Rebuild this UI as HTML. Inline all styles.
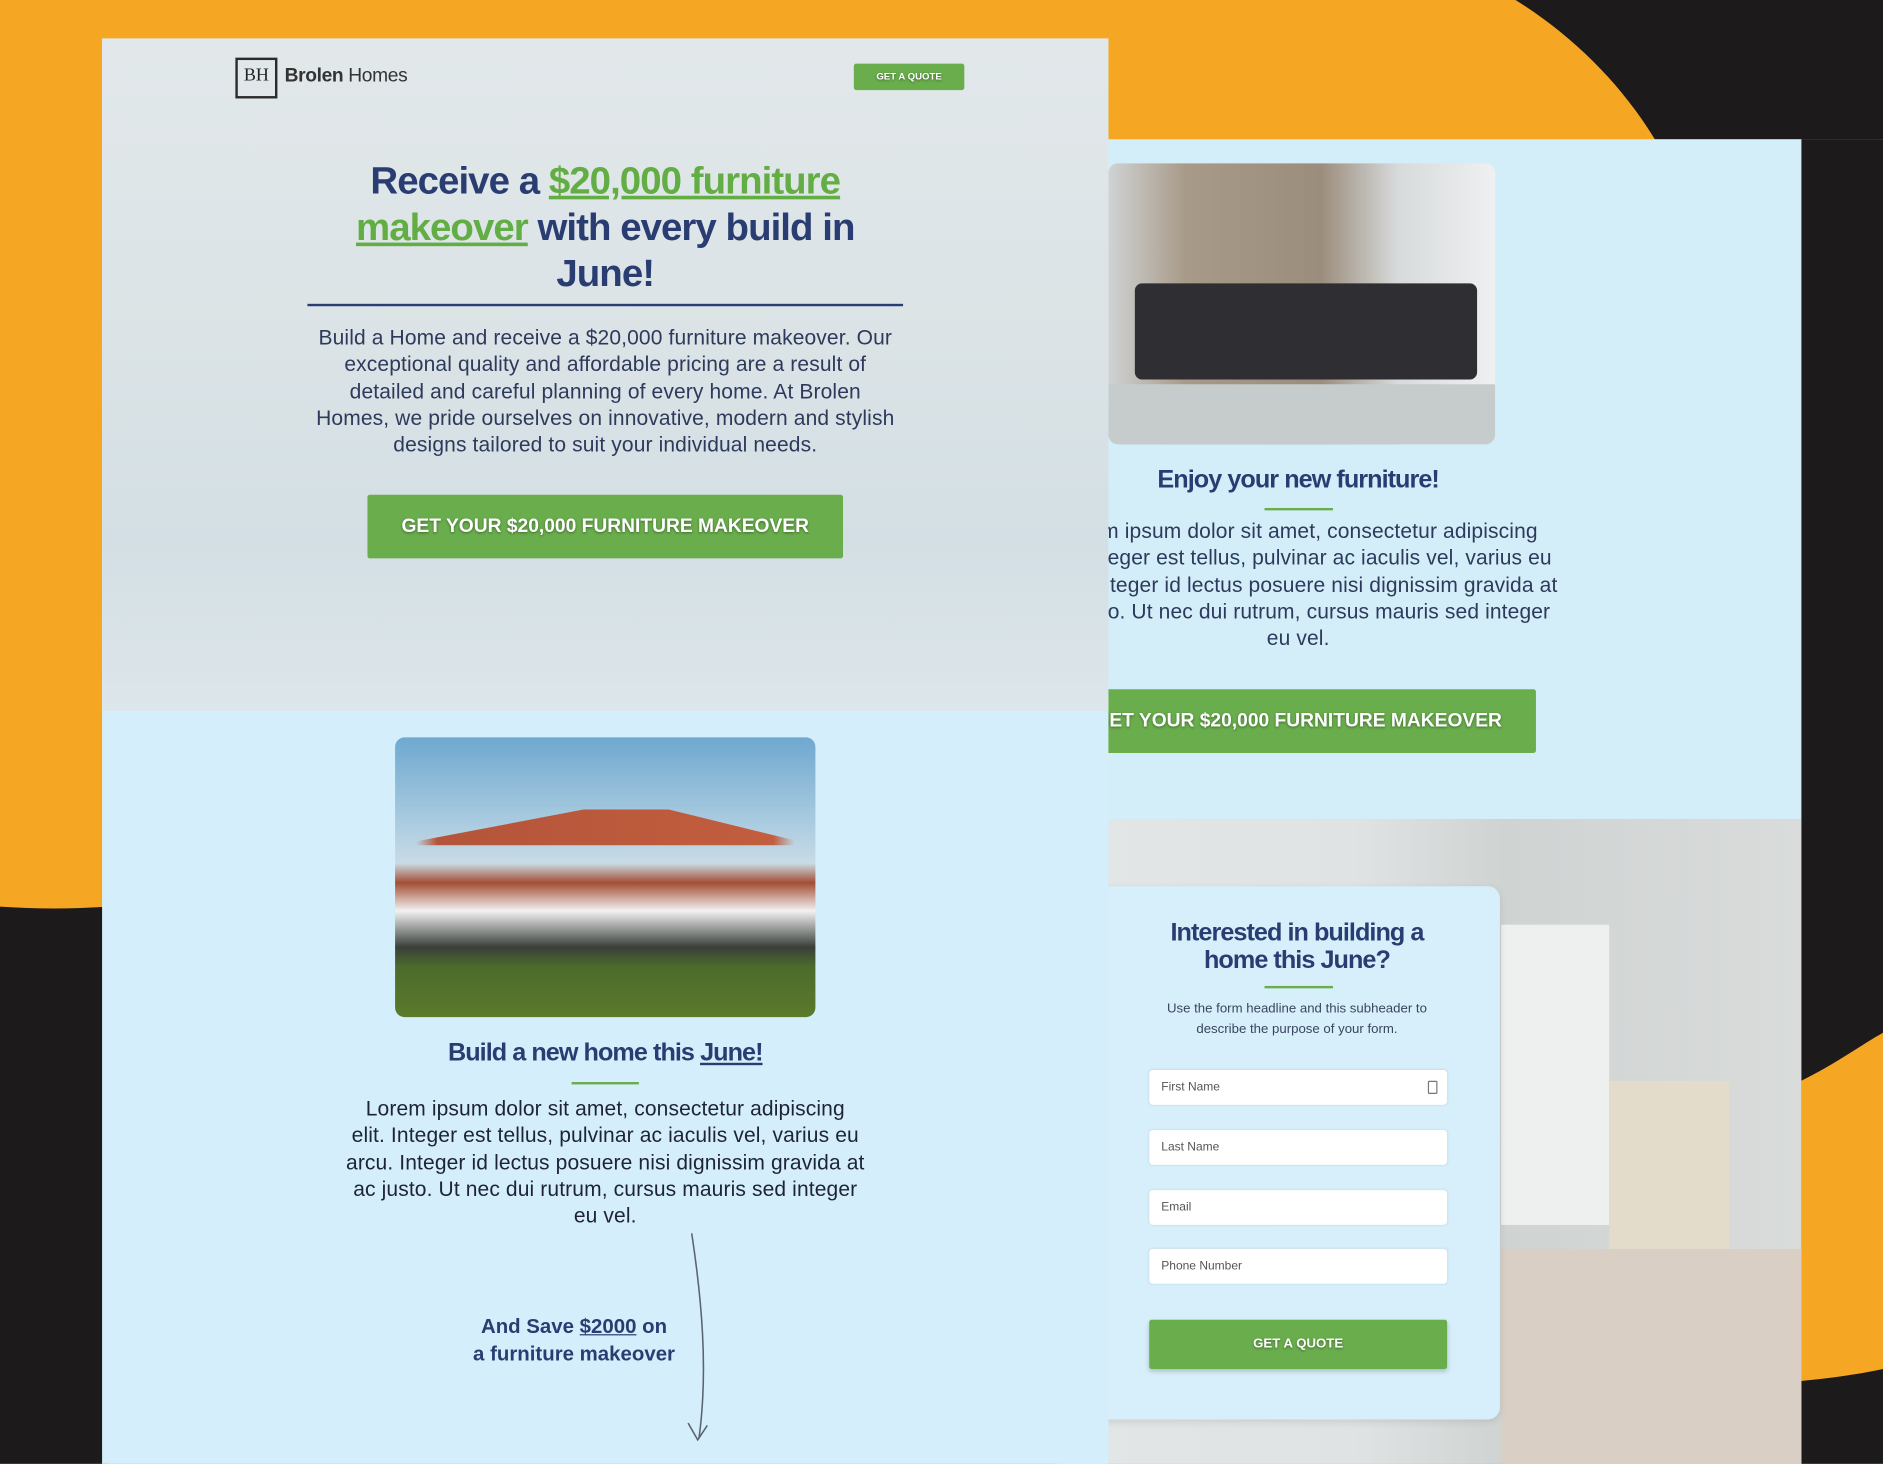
<!DOCTYPE html>
<html><head><meta charset="utf-8"><style>
html,body{margin:0;padding:0;width:1883px;height:1464px;overflow:hidden;background:#f5a623;}
#s{position:absolute;left:0;top:0;width:1568px;height:1219px;transform:scale(1.20089);transform-origin:0 0;font-family:"Liberation Sans",sans-serif;}
.a{position:absolute;}
.c{text-align:center;color:#2a3d72;white-space:nowrap;}
.h{font-weight:bold;letter-spacing:-0.8px;}
.btn{background:#69ad4c;color:#fff;font-weight:bold;text-align:center;text-shadow:0 1px 2px rgba(0,0,0,.4);border-radius:2px;white-space:nowrap;}
.inp{left:957px;width:248px;height:29px;background:#fff;border-radius:3px;font-size:10px;color:#555;line-height:29px;text-indent:10px;box-shadow:0 0 2px rgba(0,0,0,.1)}
.p{font-size:17.5px;line-height:22.3px;color:#2e3a5c;letter-spacing:0.1px}
</style></head><body><div id="s">
<svg class="a" style="left:0;top:0" width="1568" height="1219">
<path d="M1262 0 C1310 30 1350 70 1378 116 L1568 116 L1568 0Z" fill="#1c1a1b"/>
<path d="M1500 116 L1568 116 L1568 1219 L1500 1219Z" fill="#1c1a1b"/>
<path d="M1500 900 C1530 885 1550 870 1568 860 L1568 1140 C1545 1145 1520 1148 1500 1150Z" fill="#f5a623"/>
<path d="M0 755 C30 757 60 757 90 755 L90 1219 L0 1219Z" fill="#1c1a1b"/>
</svg>
<!-- right panel -->
<div class="a" style="left:880px;top:116px;width:620px;height:566px;background:#d4eef9"></div>
<div class="a" style="left:880px;top:682px;width:620px;height:537px;background:linear-gradient(90deg,#e3e6e6 0%,#dfe3e3 40%,#cfd3d2 60%,#d9dcdb 100%)"></div>
<div class="a" style="left:1250px;top:770px;width:90px;height:250px;background:#eef0f0"></div>
<div class="a" style="left:1340px;top:900px;width:100px;height:180px;background:#e4dccb"></div>
<div class="a" style="left:1250px;top:1040px;width:250px;height:179px;background:#d9cfc4"></div>
<div class="a" style="left:923px;top:136px;width:322px;height:234px;border-radius:8px;background:linear-gradient(90deg,#cfd3d4 0%,#a89a88 20%,#9b8d7c 55%,#d8dbdc 75%,#eef0f1 100%)"></div>
<div class="a" style="left:945px;top:236px;width:285px;height:80px;background:#2f2f33;border-radius:6px"></div>
<div class="a" style="left:923px;top:320px;width:322px;height:50px;background:#c6cccb;border-radius:0 0 8px 8px"></div>
<div class="a c h" style="left:880px;top:388px;width:402px;font-size:21px">Enjoy your new furniture!</div>
<div class="a" style="left:1053px;top:423px;width:57px;height:2px;background:#69ad4c"></div>
<div class="a c p" style="left:846px;top:431px;width:470px">Lorem ipsum dolor sit amet, consectetur adipiscing<br>elit. Integer est tellus, pulvinar ac iaculis vel, varius eu<br>arcu. Integer id lectus posuere nisi dignissim gravida at<br>ac justo. Ut nec dui rutrum, cursus mauris sed integer<br>eu vel.</div>
<div class="a btn" style="left:883px;top:574px;width:396px;height:53px;line-height:53px;font-size:16px">GET YOUR $20,000 FURNITURE MAKEOVER</div>
<!-- form card -->
<div class="a" style="left:900px;top:738px;width:349px;height:444px;background:#d6effa;border-radius:10px;box-shadow:0 2px 6px rgba(0,0,0,.1)"></div>
<div class="a c h" style="left:920px;top:765px;width:320px;font-size:21px;line-height:23px">Interested in building a<br>home this June?</div>
<div class="a" style="left:1053px;top:821px;width:57px;height:2px;background:#69ad4c"></div>
<div class="a c" style="left:930px;top:832px;width:300px;font-size:11px;line-height:17px;color:#3a4560">Use the form headline and this subheader to<br>describe the purpose of your form.</div>
<div class="a inp" style="top:891px">First Name<span style="position:absolute;right:8px;top:9px;width:6px;height:9px;border:1px solid #777;border-radius:1px;line-height:0"></span></div>
<div class="a inp" style="top:941px">Last Name</div>
<div class="a inp" style="top:991px">Email</div>
<div class="a inp" style="top:1040px">Phone Number</div>
<div class="a btn" style="left:957px;top:1099px;width:248px;height:41px;line-height:41px;font-size:11px;box-shadow:0 2px 4px rgba(0,0,0,.2)">GET A QUOTE</div>
<!-- left panel -->
<div class="a" style="left:85px;top:32px;width:838px;height:1187px;background:#d4effb"></div>
<div class="a" style="left:85px;top:32px;width:838px;height:560px;background:linear-gradient(180deg,#e2e8ea 0%,#dbe3e6 45%,#d3dfe4 75%,#dde6ea 100%)"></div>
<div class="a" style="left:196px;top:48px;width:31px;height:30px;border:2px solid #2b2b2b;font-family:'Liberation Serif',serif;font-size:15px;color:#222;text-align:center;line-height:26px">BH</div>
<div class="a" style="left:237px;top:55px;font-size:16px;color:#333;letter-spacing:-0.3px"><b>Brolen</b> Homes</div>
<div class="a btn" style="left:711px;top:53px;width:92px;height:22px;line-height:22px;font-size:8px">GET A QUOTE</div>
<div class="a c h" style="left:204px;top:131px;width:600px;font-size:32px;line-height:38.5px">Receive a <u style="color:#63ad45">$20,000 furniture</u><br><u style="color:#63ad45">makeover</u> with every build in<br>June!</div>
<div class="a" style="left:256px;top:253px;width:496px;height:2px;background:#2a3d72"></div>
<div class="a c p" style="left:204px;top:270px;width:600px">Build a Home and receive a $20,000 furniture makeover. Our<br>exceptional quality and affordable pricing are a result of<br>detailed and careful planning of every home. At Brolen<br>Homes, we pride ourselves on innovative, modern and stylish<br>designs tailored to suit your individual needs.</div>
<div class="a btn" style="left:306px;top:412px;width:396px;height:53px;line-height:53px;font-size:16px">GET YOUR $20,000 FURNITURE MAKEOVER</div>
<div class="a" style="left:329px;top:614px;width:350px;height:233px;border-radius:8px;overflow:hidden;background:linear-gradient(180deg,#6fa8cf 0%,#a9cbe0 30%,#c9dbe5 45%,#a34e34 52%,#f2f2f2 62%,#3a3f3a 75%,#4c6b2c 82%,#5b7a2b 100%)">
<div class="a" style="left:0;top:60px;width:350px;height:30px;background:linear-gradient(90deg,transparent 5%,#b4543a 10%,#c25e3e 90%,transparent 95%);clip-path:polygon(0 100%,45% 0,65% 0,100% 100%)"></div></div>
<div class="a c h" style="left:300px;top:865px;width:408px;font-size:21px">Build a new home this <u>June!</u></div>
<div class="a" style="left:476px;top:901px;width:56px;height:2px;background:#69ad4c"></div>
<div class="a c p" style="left:204px;top:912px;width:600px;color:#1e2435">Lorem ipsum dolor sit amet, consectetur adipiscing<br>elit. Integer est tellus, pulvinar ac iaculis vel, varius eu<br>arcu. Integer id lectus posuere nisi dignissim gravida at<br>ac justo. Ut nec dui rutrum, cursus mauris sed integer<br>eu vel.</div>
<div class="a c" style="left:370px;top:1093px;width:216px;font-size:17px;line-height:23px;font-weight:bold">And Save <u>$2000</u> on<br>a furniture makeover</div>
<svg class="a" style="left:560px;top:1020px" width="40" height="185"><path d="M16 7 C24 60 30 120 22 178 M13 165 L21 179 L29 167" stroke="#5a6470" stroke-width="1.3" fill="none"/></svg>
</div></body></html>
